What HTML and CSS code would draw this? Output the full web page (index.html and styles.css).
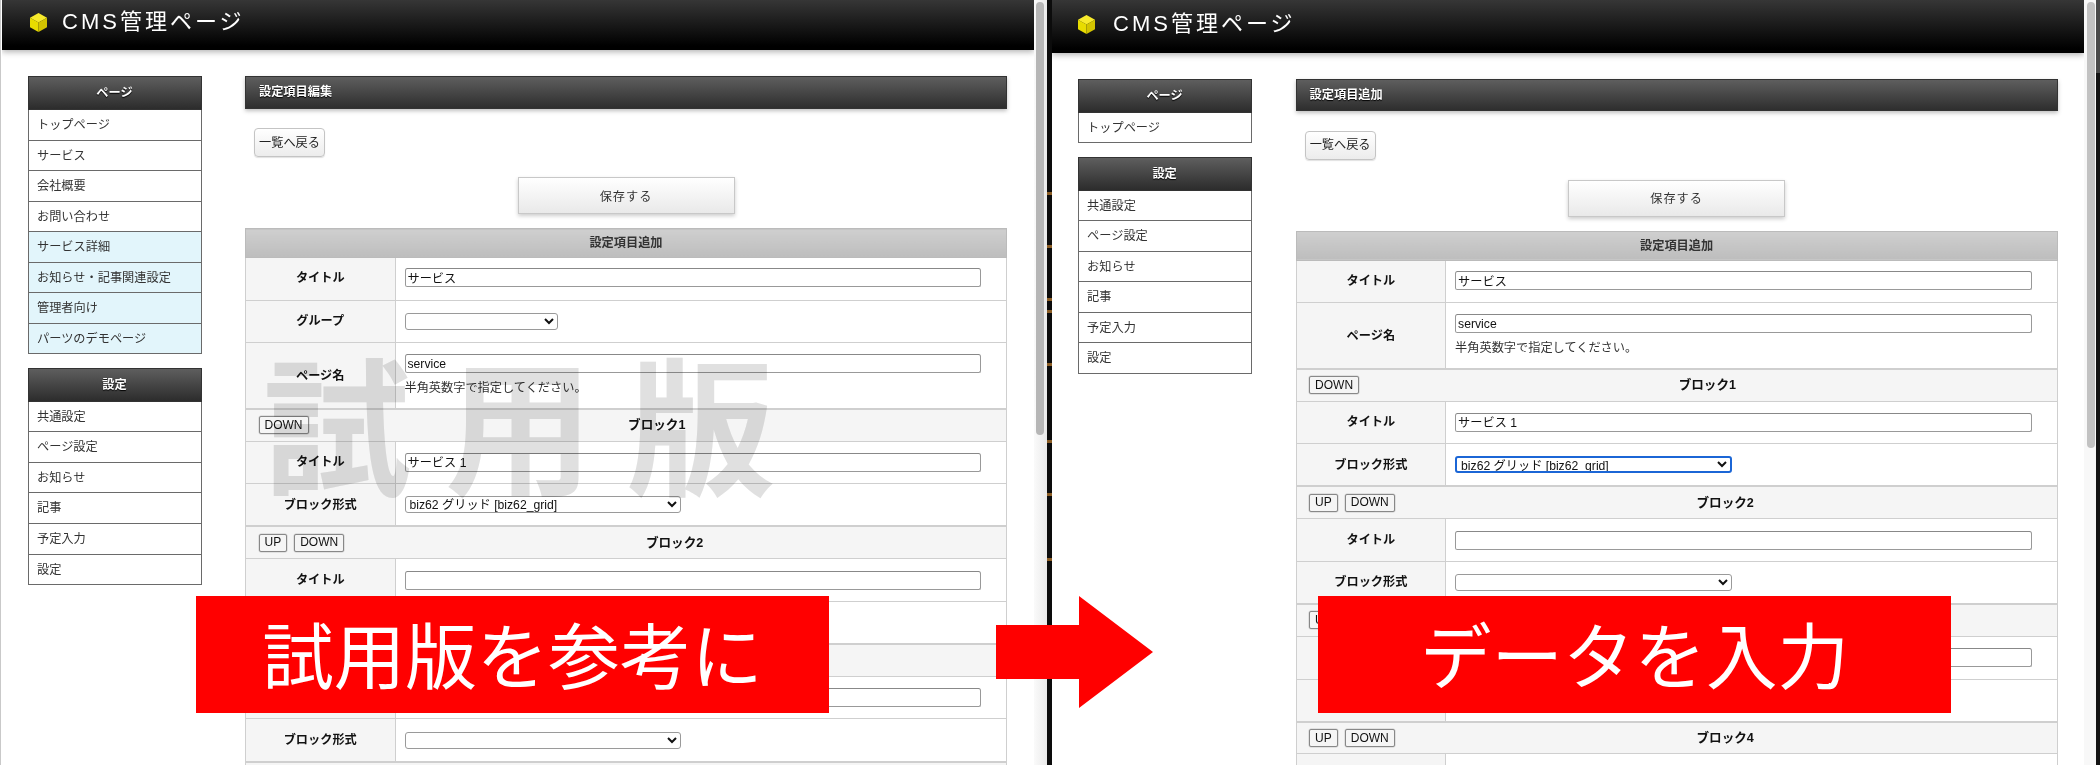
FILE: index.html
```html
<!DOCTYPE html>
<html lang="ja">
<head>
<meta charset="utf-8">
<title>CMS管理ページ</title>
<link rel="stylesheet" href="styles.css">
</head>
<body>
<div class="screen">
  <section class="window window-left">
    <header class="topbar">
      <svg class="logo" viewBox="0 0 17 19"><polygon points="8.5,0 17,4.8 8.5,9.6 0,4.8" fill="#f7ea2c"/><polygon points="0,4.8 8.5,9.6 8.5,19 0,14.2" fill="#e8dc00"/><polygon points="17,4.8 8.5,9.6 8.5,19 17,14.2" fill="#d3c400"/></svg>
      <span class="brand">CMS管理ページ</span>
    </header>
    <div class="content">
      <aside class="side">
        <nav class="group">
          <h2 class="group-title">ページ</h2>
          <a class="item">トップページ</a>
          <a class="item">サービス</a>
          <a class="item">会社概要</a>
          <a class="item">お問い合わせ</a>
          <a class="item item-blue">サービス詳細</a>
          <a class="item item-blue">お知らせ・記事関連設定</a>
          <a class="item item-blue">管理者向け</a>
          <a class="item item-blue">パーツのデモページ</a>
        </nav>
        <nav class="group">
          <h2 class="group-title">設定</h2>
          <a class="item">共通設定</a>
          <a class="item">ページ設定</a>
          <a class="item">お知らせ</a>
          <a class="item">記事</a>
          <a class="item">予定入力</a>
          <a class="item">設定</a>
        </nav>
      </aside>
      <main class="main">
        <h1 class="page-title">設定項目編集</h1>
        <div class="back-row"><button class="back">一覧へ戻る</button></div>
        <div class="save-row"><button class="save">保存する</button></div>
        <table class="form">
          <colgroup><col class="col-label"><col></colgroup>
          <tr class="row-head"><th colspan="2">設定項目追加</th></tr>
          <tr class="row"><th>タイトル</th><td><input class="text" value="サービス"></td></tr>
          <tr class="row"><th>グループ</th><td><select class="sel sel-short"><option></option></select></td></tr>
          <tr class="row-tall"><th>ページ名</th><td><input class="text" value="service"><p class="note">半角英数字で指定してください。</p></td></tr>
          <tr class="row-block"><td colspan="2"><div class="block"><button class="mini">DOWN</button><b class="block-name">ブロック1</b></div></td></tr>
          <tr class="row"><th>タイトル</th><td><input class="text" value="サービス 1"></td></tr>
          <tr class="row"><th>ブロック形式</th><td><select class="sel"><option>biz62 グリッド [biz62_grid]</option></select></td></tr>
          <tr class="row-block"><td colspan="2"><div class="block"><button class="mini">UP</button><button class="mini">DOWN</button><b class="block-name">ブロック2</b></div></td></tr>
          <tr class="row"><th>タイトル</th><td><input class="text"></td></tr>
          <tr class="row"><th>ブロック形式</th><td><select class="sel"><option></option></select></td></tr>
          <tr class="row-block"><td colspan="2"><div class="block"><button class="mini">UP</button><button class="mini">DOWN</button><b class="block-name">ブロック3</b></div></td></tr>
          <tr class="row"><th>タイトル</th><td><input class="text"></td></tr>
          <tr class="row"><th>ブロック形式</th><td><select class="sel"><option></option></select></td></tr>
          <tr class="row-block"><td colspan="2"><div class="block"><button class="mini">UP</button><button class="mini">DOWN</button><b class="block-name">ブロック4</b></div></td></tr>
        </table>
      </main>
    </div>
    <div class="watermark">試用版</div>
  </section>
  <div class="scrollbar"><span class="thumb thumb-left"></span></div>
  <div class="strip strip-code"></div>

  <section class="window window-right">
    <header class="topbar">
      <svg class="logo" viewBox="0 0 17 19"><polygon points="8.5,0 17,4.8 8.5,9.6 0,4.8" fill="#f7ea2c"/><polygon points="0,4.8 8.5,9.6 8.5,19 0,14.2" fill="#e8dc00"/><polygon points="17,4.8 8.5,9.6 8.5,19 17,14.2" fill="#d3c400"/></svg>
      <span class="brand">CMS管理ページ</span>
    </header>
    <div class="content">
      <aside class="side">
        <nav class="group">
          <h2 class="group-title">ページ</h2>
          <a class="item">トップページ</a>
        </nav>
        <nav class="group">
          <h2 class="group-title">設定</h2>
          <a class="item">共通設定</a>
          <a class="item">ページ設定</a>
          <a class="item">お知らせ</a>
          <a class="item">記事</a>
          <a class="item">予定入力</a>
          <a class="item">設定</a>
        </nav>
      </aside>
      <main class="main">
        <h1 class="page-title">設定項目追加</h1>
        <div class="back-row"><button class="back">一覧へ戻る</button></div>
        <div class="save-row"><button class="save">保存する</button></div>
        <table class="form">
          <colgroup><col class="col-label"><col></colgroup>
          <tr class="row-head"><th colspan="2">設定項目追加</th></tr>
          <tr class="row"><th>タイトル</th><td><input class="text" value="サービス"></td></tr>
          <tr class="row-tall"><th>ページ名</th><td><input class="text" value="service"><p class="note">半角英数字で指定してください。</p></td></tr>
          <tr class="row-block"><td colspan="2"><div class="block"><button class="mini">DOWN</button><b class="block-name">ブロック1</b></div></td></tr>
          <tr class="row"><th>タイトル</th><td><input class="text" value="サービス 1"></td></tr>
          <tr class="row"><th>ブロック形式</th><td><select class="sel sel-focus"><option>biz62 グリッド [biz62_grid]</option></select></td></tr>
          <tr class="row-block"><td colspan="2"><div class="block"><button class="mini">UP</button><button class="mini">DOWN</button><b class="block-name">ブロック2</b></div></td></tr>
          <tr class="row"><th>タイトル</th><td><input class="text"></td></tr>
          <tr class="row"><th>ブロック形式</th><td><select class="sel"><option></option></select></td></tr>
          <tr class="row-block"><td colspan="2"><div class="block"><button class="mini">UP</button><button class="mini">DOWN</button><b class="block-name">ブロック3</b></div></td></tr>
          <tr class="row"><th>タイトル</th><td><input class="text"></td></tr>
          <tr class="row"><th>ブロック形式</th><td><select class="sel"><option></option></select></td></tr>
          <tr class="row-block"><td colspan="2"><div class="block"><button class="mini">UP</button><button class="mini">DOWN</button><b class="block-name">ブロック4</b></div></td></tr>
          <tr class="row"><th>タイトル</th><td><input class="text"></td></tr>
        </table>
      </main>
    </div>
  </section>
  <div class="scrollbar scrollbar-right"><span class="thumb thumb-right"></span></div>
  <div class="strip strip-end"></div>

  <div class="banner banner-left">試用版を参考に</div>
  <svg class="arrow" viewBox="0 0 157 112"><polygon points="0,29 83,29 83,0 157,56 83,112 83,83 0,83" fill="#ff0000"/></svg>
  <div class="banner banner-right">データを入力</div>
</div>
</body>
</html>
```
FILE: styles.css
```css
* { box-sizing: border-box; }
html, body { margin: 0; padding: 0; }
body {
  width: 2100px;
  height: 765px;
  overflow: hidden;
  background: #fff;
  font-family: "Liberation Sans", "Noto Sans CJK JP", sans-serif;
  font-size: 12.2px;
  line-height: 16px;
  color: #222;
}
.screen {
  position: relative;
  display: flex;
  width: 2100px;
  height: 765px;
  overflow: hidden;
  padding-left: 1px;
  background: #fff;
  border-left: 1px solid #c9c9c9;
}

/* window */
.window {
  position: relative;
  flex: none;
  height: 765px;
  overflow: hidden;
  background: #fff;
}
.window-left { width: 1032px; --bar: 50px; }
.window-right { width: 1032px; --bar: 52.7px; }

.topbar {
  display: flex;
  align-items: center;
  height: var(--bar);
  padding: 0 0 6px 28px;
  background: linear-gradient(#363636, #000 92%);
  box-shadow: 0 2px 6px rgba(0, 0, 0, .3);
}
.window-right .topbar { padding-left: 26px; padding-top: 2px; }
.logo { flex: none; width: 17px; height: 19px; margin-right: 15px; }
.window-right .logo { margin-right: 18px; }
.brand {
  color: #fff;
  font-size: 22px;
  letter-spacing: 3px;
  line-height: 26px;
}

.content { display: flex; padding: 26px 0 0 25.5px; }
.window-right .content { padding-left: 25.6px; }

/* sidebar */
.side { flex: none; width: 174px; margin-right: 43.5px; }
.window-right .side { margin-right: 44px; }
.group { margin-bottom: 13.4px; border: 1px solid #6a6a6a; border-top: 0; }
.group-title {
  height: 34px;
  margin: 0 -1px;
  border: 1px solid #333;
  background: linear-gradient(#5e5e5e, #2c2c2c);
  color: #fff;
  font-size: 12.2px;
  font-weight: bold;
  line-height: 32px;
  text-align: center;
  text-shadow: 0 1px 1px #000;
}
.item {
  display: block;
  height: 30.55px;
  padding-left: 8.5px;
  border-bottom: 1px solid #6a6a6a;
  color: #333;
  line-height: 31px;
}
.item:last-child { border-bottom: 0; height: 29.55px; }
.item-blue { background: #e2f5fb; }

/* main */
.main { flex: none; width: 762px; }
.page-title {
  height: 32.5px;
  margin: 0;
  padding-left: 13px;
  border: 1px solid #333;
  background: linear-gradient(#5e5e5e, #2e2e2e);
  box-shadow: 0 2px 4px rgba(0, 0, 0, .25);
  color: #fff;
  font-size: 12.2px;
  font-weight: bold;
  line-height: 30px;
  text-shadow: 0 1px 1px #000;
}
.back-row { padding: 19.5px 0 0 9px; }
.back {
  display: block;
  width: 71px;
  height: 29px;
  padding: 0;
  border: 1px solid #c4c4c4;
  border-radius: 4px;
  background: linear-gradient(#fff, #ececec);
  box-shadow: 0 1px 1px rgba(0, 0, 0, .12);
  color: #222;
  font: inherit;
}
.save-row { display: flex; justify-content: center; padding-top: 20px; }
.save {
  width: 217px;
  height: 37px;
  padding: 2px 0 0;
  border: 1px solid #c8c8c8;
  background: linear-gradient(#fff, #e9e9e9);
  box-shadow: 0 2px 4px rgba(0, 0, 0, .2);
  color: #333;
  font: inherit;
  letter-spacing: 1px;
}

/* form table */
.form {
  width: 100%;
  margin-top: 14px;
  border-collapse: collapse;
  table-layout: fixed;
  background: #fff;
}
.col-label { width: 149.5px; }
.form th, .form td { padding: 0; border: 1px solid #cfcfcf; }
.form th { background: #f5f5f5; color: #111; text-align: center; font-weight: bold; }
.form td { padding: 0 9px; }
.row-head { height: 29px; }
.form .row-head th {
  border: 1px solid #bbb;
  background: linear-gradient(#cfcfcf, #bdbdbd);
  color: #333;
}
.form .row-head + .row th, .form .row-head + .row td { padding-bottom: 2px; }
.row { height: 42.67px; }
.row-tall { height: 66px; }
.row-tall td { padding-top: 11px; vertical-align: top; }
.row-block { height: 32.3px; }
.form .row-block td { padding: 0 8px 0 12.5px; border-width: 2px 1px 1px; background: #f5f5f5; }
.block { display: flex; align-items: center; gap: 7px; }
.block-name { flex: 1; color: #111; font-size: 12.6px; text-align: center; }
.mini {
  flex: none;
  height: 18px;
  padding: 0 5px;
  border: 1px solid #888;
  border-radius: 2px;
  background: #f5f5f5;
  box-shadow: 0 0 0 .5px #ccc;
  color: #111;
  font: inherit;
  font-size: 12px;
  line-height: 15px;
}
.text {
  display: block;
  width: 576.5px;
  height: 19px;
  padding: 0 2px;
  border: 1px solid #999;
  border-top-color: #888;
  border-radius: 2.5px;
  background: transparent;
  color: #111;
  font: inherit;
  outline: 0;
}
.sel {
  display: block;
  width: 276.5px;
  height: 17px;
  padding: 0;
  border: 1px solid #9a9a9a;
  border-radius: 3px;
  background: #fff;
  color: #111;
  font: inherit;
  line-height: 15px;
  outline: 0;
}
.sel-short { width: 153.5px; }
.sel-focus { border: 2px solid #1b66d6; }
.note { margin: 7px 0 0; color: #333; }

/* watermark */
.watermark {
  position: absolute;
  left: 261px;
  top: 340px;
  color: #e0e0e0;
  font-family: "Noto Sans CJK JP", sans-serif;
  font-size: 148px;
  font-weight: 700;
  letter-spacing: 34px;
  line-height: 160px;
  white-space: nowrap;
  mix-blend-mode: multiply;
}

/* chrome between windows */
.scrollbar {
  flex: none;
  width: 13px;
  height: 765px;
  padding: 2px 0 0 2px;
  background: linear-gradient(90deg, #fafafa, #eaeaea);
}
.scrollbar-right { width: 12px; padding-left: 3px; background: #f8f8f8; }
.thumb { display: block; width: 8px; border-radius: 4px; background: #bdbdbd; }
.thumb-left { height: 433px; background: #b6b6b6; }
.thumb-right { height: 446px; background: #c2c2c2; }
.strip { flex: none; height: 765px; }
.strip-code {
  width: 5px;
  background:
    linear-gradient(#0000 192px, #8a5c24 192px 195px, #0000 195px 245px, #8a5c24 245px 248px, #0000 248px 298px, #8a5c24 298px 301px, #0000 301px 310px, #8a5c24 310px 313px, #0000 313px 363px, #8a5c24 363px 366px, #0000 366px 440px, #8a5c24 440px 443px, #0000 443px 493px, #8a5c24 493px 496px, #0000 496px 558px, #8a5c24 558px 561px, #0000 561px),
    #0c0c0c;
}
.strip-end { width: 4px; background: linear-gradient(#4a4a4a 73px, #141414 73px); }

/* overlays */
.banner {
  position: absolute;
  top: 596px;
  height: 117px;
  width: 633px;
  background: #ff0000;
  color: #fff;
  font-family: "Noto Sans CJK JP", sans-serif;
  font-size: 71.5px;
  font-weight: 400;
  line-height: 113px;
  text-align: center;
  white-space: nowrap;
}
.banner-left { left: 195px; }
.banner-right { left: 1317px; }
.arrow { position: absolute; left: 994.5px; top: 596px; width: 157px; height: 112px; }
```
